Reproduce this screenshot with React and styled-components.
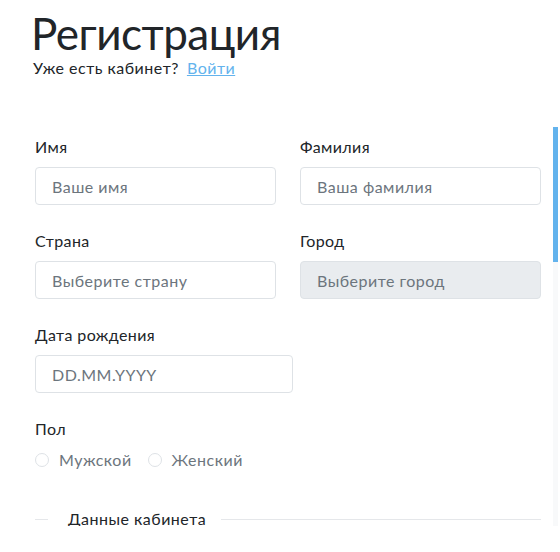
import React from "react";
import styled, { createGlobalStyle } from "styled-components";

const Global = createGlobalStyle`
  html, body { margin: 0; padding: 0; background: #fff; }
  body { font-family: "Lato", "Noto Sans", sans-serif; color: #212529; overflow: hidden; }
  * { box-sizing: border-box; }
`;

const Page = styled.div`
  width: 560px;
  height: 552px;
  display: flex;
  flex-direction: column;
  padding-right: 2px;
`;

const Header = styled.header`
  padding: 8px 0 0 31px;
  height: 127px;
`;

const Title = styled.h1`
  margin: 0;
  font-size: 44px;
  font-weight: 400;
  line-height: 50px;
  letter-spacing: -0.5px;
`;

const Sub = styled.p`
  margin: 0 0 0 2px;
  font-size: 16px;
  line-height: 20px;
  letter-spacing: 0.5px;
`;

const Link = styled.a`
  color: #63b3ed;
  text-decoration: underline;
  margin-left: 8px;
  cursor: pointer;
`;

const Body = styled.div`
  display: flex;
  height: 399px;
`;

const Scroll = styled.div`
  flex: 1;
  overflow: hidden;
  padding: 8px 12px 0 35px;
`;

const Track = styled.div`
  width: 5px;
  background: #f8f9fa;
  display: flex;
  flex-direction: column;
`;

const Thumb = styled.div`
  height: 135px;
  background: #63b3ed;
`;

const Grid = styled.div`
  display: grid;
  grid-template-columns: 241px 241px;
  column-gap: 24px;
  row-gap: 24px;
`;

const Field = styled.div`
  display: flex;
  flex-direction: column;
  width: ${(p) => (p.$w ? p.$w + "px" : "auto")};
  margin-top: ${(p) => (p.$mt ? p.$mt + "px" : "0")};
`;

const Label = styled.label`
  font-size: 16px;
  line-height: 24px;
  margin-bottom: 8px;
  color: #212529;
  letter-spacing: 0.4px;
`;

const Input = styled.input`
  height: 38px;
  border: 1px solid #dee2e6;
  border-radius: 4px;
  padding: 0 16px;
  font-family: inherit;
  font-size: 16px;
  letter-spacing: 0.5px;
  color: #212529;
  background: ${(p) => (p.disabled ? "#e9ecef" : "#fff")};
  outline: none;
  &::placeholder { color: #6c757d; opacity: 1; }
`;

const Radios = styled.div`
  display: flex;
  align-items: center;
  gap: 16px;
`;

const RadioItem = styled.label`
  display: flex;
  align-items: center;
  gap: 10px;
  font-size: 16px;
  line-height: 22px;
  color: #6c757d;
  letter-spacing: 0.5px;
`;

const Circle = styled.span`
  width: 14px;
  height: 14px;
  border: 1px solid #dee2e6;
  border-radius: 50%;
  background: #fff;
`;

const Divider = styled.div`
  display: flex;
  align-items: center;
  margin-top: 37px;
  width: 506px;
`;

const Line = styled.span`
  height: 1px;
  background: #e5e7ea;
  flex: ${(p) => (p.$grow ? 1 : "none")};
  width: ${(p) => (p.$grow ? "auto" : "13px")};
`;

const DivText = styled.span`
  font-size: 16px;
  line-height: 22px;
  margin: 0 15px 0 20px;
  color: #212529;
  letter-spacing: 0.5px;
`;

export default function App() {
  return (
    <Page>
      <Global />
      <Header>
        <Title>Регистрация</Title>
        <Sub>
          Уже есть кабинет?<Link>Войти</Link>
        </Sub>
      </Header>
      <Body>
        <Scroll>
          <Grid>
            <Field>
              <Label>Имя</Label>
              <Input placeholder="Ваше имя" />
            </Field>
            <Field>
              <Label>Фамилия</Label>
              <Input placeholder="Ваша фамилия" />
            </Field>
            <Field>
              <Label>Страна</Label>
              <Input placeholder="Выберите страну" />
            </Field>
            <Field>
              <Label>Город</Label>
              <Input placeholder="Выберите город" disabled />
            </Field>
          </Grid>
          <Field $w={258} $mt={24}>
            <Label>Дата рождения</Label>
            <Input placeholder="DD.MM.YYYY" />
          </Field>
          <Field $mt={24}>
            <Label>Пол</Label>
            <Radios>
              <RadioItem>
                <Circle />
                Мужской
              </RadioItem>
              <RadioItem>
                <Circle />
                Женский
              </RadioItem>
            </Radios>
          </Field>
          <Divider>
            <Line />
            <DivText>Данные кабинета</DivText>
            <Line $grow />
          </Divider>
        </Scroll>
        <Track>
          <Thumb />
        </Track>
      </Body>
    </Page>
  );
}
